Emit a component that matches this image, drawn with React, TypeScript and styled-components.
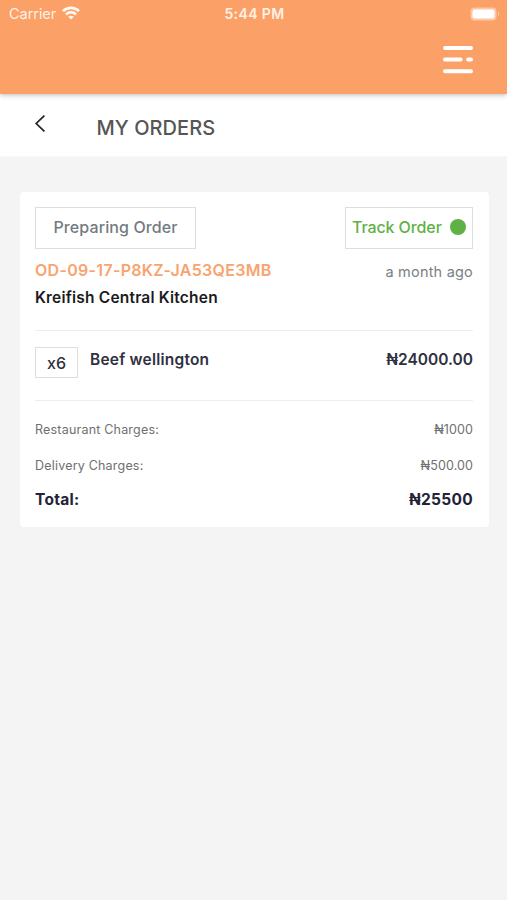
import React from "react";
import styled, { createGlobalStyle } from "styled-components";

const GlobalStyle = createGlobalStyle`
  * { box-sizing: border-box; }
  body {
    margin: 0;
    background: #f4f4f4;
    font-family: Inter, "Liberation Sans", sans-serif;
  }
`;

const Screen = styled.div`
  display: flex;
  flex-direction: column;
  width: 100%;
  min-height: 900px;
  background: #f4f4f4;
  overflow: hidden;
`;

const AppHeader = styled.header`
  position: relative;
  z-index: 1;
  height: 94px;
  background: #fba168;
  box-shadow: 0 1px 5px rgba(0, 0, 0, 0.28);
`;

const StatusBar = styled.div`
  display: grid;
  grid-template-columns: 1fr auto 1fr;
  align-items: center;
  height: 28px;
  padding: 0 7px 0 9px;
  color: #fff1e6;
`;

const Carrier = styled.div`
  display: flex;
  align-items: center;
  gap: 6px;
  font-size: 14.5px;
  line-height: 20px;
  letter-spacing: -0.05px;
`;

const Clock = styled.div`
  font-size: 14px;
  font-weight: 600;
  line-height: 20px;
  letter-spacing: 0.4px;
`;

const BatterySlot = styled.div`
  display: flex;
  justify-content: flex-end;
`;

const MenuRow = styled.div`
  display: flex;
  justify-content: flex-end;
  padding: 17px 33px 0 0;
`;

const PlainButton = styled.button`
  display: block;
  padding: 0;
  border: 0;
  background: none;
  line-height: 0;
`;

const TitleBar = styled.div`
  display: flex;
  align-items: flex-start;
  height: 63px;
  padding: 20px 34px 0;
  background: #fff;
  border-bottom: 1px solid #f8f8f8;
`;

const Title = styled.h1`
  margin: 2px 0 0 50.5px;
  font-size: 20px;
  font-weight: 500;
  line-height: 24px;
  letter-spacing: 0.05px;
  color: #555;
`;

const OrderCard = styled.article`
  display: flex;
  flex-direction: column;
  height: 335px;
  margin: 35px 18px 0 20px;
  padding: 15px 16px 0 15px;
  border-radius: 4px;
  background: #fff;
`;

const Row = styled.div<{ $h: number }>`
  display: flex;
  align-items: center;
  justify-content: space-between;
  height: ${(p) => p.$h}px;
`;

const StatusBox = styled.div`
  display: flex;
  align-items: center;
  justify-content: center;
  width: 161px;
  height: 42px;
  padding-bottom: 2px;
  border: 1px solid #dcdfe1;
  font-size: 16px;
  font-weight: 500;
  line-height: 20px;
  letter-spacing: 0.1px;
  color: #747b80;
`;

const TrackButton = styled.button`
  display: flex;
  align-items: center;
  justify-content: space-between;
  width: 128px;
  height: 42px;
  padding: 0 6px 2px 6px;
  border: 1px solid #dcdfe1;
  background: #fff;
  font: 500 16px/20px Inter, sans-serif;
  letter-spacing: -0.1px;
  color: #5fb146;
`;

const Dot = styled.span`
  width: 16px;
  height: 16px;
  border-radius: 50%;
  background: #5fb146;
`;

const OrderCode = styled.span`
  font-size: 16px;
  font-weight: 600;
  letter-spacing: 0.3px;
  color: #f8a46f;
`;

const Age = styled.span`
  padding-top: 3px;
  font-size: 14.5px;
  letter-spacing: 0.2px;
  color: #7c7f83;
`;

const Kitchen = styled.div`
  height: 39px;
  font-size: 15.5px;
  font-weight: 600;
  line-height: 13px;
  letter-spacing: 0.2px;
  color: #1b1b1d;
`;

const ItemRow = styled.div`
  display: flex;
  align-items: flex-start;
  height: 71px;
  padding-top: 16px;
  border-top: 1px solid #ededed;
  border-bottom: 1px solid #ededed;
  color: #2f3040;
`;

const Quantity = styled.div`
  width: 43px;
  height: 31px;
  border: 1px solid #dedede;
  font-size: 16px;
  font-weight: 500;
  line-height: 30px;
  text-align: center;
`;

const ItemText = styled.div`
  font-size: 15.5px;
  font-weight: 600;
  line-height: 25px;
`;

const ItemName = styled(ItemText)`
  margin-left: 12px;
  letter-spacing: 0.22px;
`;

const ItemPrice = styled(ItemText)`
  margin-left: auto;
  letter-spacing: 0;
`;

const Charges = styled.div`
  padding-top: 11px;
`;

const ChargeText = styled.span`
  font-size: 12.5px;
  line-height: 16px;
  letter-spacing: 0.2px;
  color: #6f6f72;
`;

const ChargeAmount = styled(ChargeText)`
  letter-spacing: 0.1px;
`;

const TotalText = styled.span`
  font-size: 15.5px;
  font-weight: 700;
  line-height: 20px;
  letter-spacing: 0.3px;
  color: #232338;
`;

const WifiIcon = () => (
  <svg width="18" height="16" viewBox="0 0 18 16" fill="none" stroke="#fff8f2" strokeWidth="2.7">
    <path d="M1 5.1C5.5.7 12.5.7 17 5.1" />
    <path d="M4 8.4c2.9-2.7 7.1-2.7 10 0" />
    <path d="M9 13.6 6.2 10.8c1.6-1.5 4-1.5 5.6 0z" fill="#fff8f2" stroke="none" />
  </svg>
);

const BatteryIcon = () => (
  <svg width="30" height="15" viewBox="0 0 30 15">
    <rect x="0.5" y="0.5" width="26" height="13" rx="4" fill="#fdc7a5" />
    <rect x="2.5" y="2.5" width="22" height="9" rx="2.2" fill="#fff" />
    <path d="M28 4.8c1.7.8 1.7 3.6 0 4.4z" fill="#fdc7a5" />
  </svg>
);

const MenuIcon = () => (
  <svg width="32" height="30" viewBox="0 0 32 30" stroke="#fff" strokeWidth="4" strokeLinecap="round">
    <path d="M3 3h26M3 14.6h15.6M26.1 14.6H29M3 26.2h26" />
  </svg>
);

const BackIcon = () => (
  <svg width="12" height="19" viewBox="0 0 12 19" fill="none" stroke="#222" strokeWidth="1.7">
    <path d="M10.4 1.6 2.2 9.5l8.2 7.9" />
  </svg>
);

const charges = [
  { label: "Restaurant Charges:", amount: "₦1000", height: 36 },
  { label: "Delivery Charges:", amount: "₦500.00", height: 35 },
];

export default function App() {
  return (
    <Screen>
      <GlobalStyle />
      <AppHeader>
        <StatusBar>
          <Carrier>
            Carrier <WifiIcon />
          </Carrier>
          <Clock>5:44 PM</Clock>
          <BatterySlot>
            <BatteryIcon />
          </BatterySlot>
        </StatusBar>
        <MenuRow>
          <PlainButton aria-label="Menu">
            <MenuIcon />
          </PlainButton>
        </MenuRow>
      </AppHeader>
      <TitleBar>
        <PlainButton aria-label="Back">
          <BackIcon />
        </PlainButton>
        <Title>MY ORDERS</Title>
      </TitleBar>
      <OrderCard>
        <Row $h={42}>
          <StatusBox>Preparing Order</StatusBox>
          <TrackButton>
            Track Order <Dot />
          </TrackButton>
        </Row>
        <Row $h={42}>
          <OrderCode>OD-09-17-P8KZ-JA53QE3MB</OrderCode>
          <Age>a month ago</Age>
        </Row>
        <Kitchen>Kreifish Central Kitchen</Kitchen>
        <ItemRow>
          <Quantity>x6</Quantity>
          <ItemName>Beef wellington</ItemName>
          <ItemPrice>₦24000.00</ItemPrice>
        </ItemRow>
        <Charges>
          {charges.map((c) => (
            <Row key={c.label} $h={c.height}>
              <ChargeText>{c.label}</ChargeText>
              <ChargeAmount>{c.amount}</ChargeAmount>
            </Row>
          ))}
          <Row $h={34}>
            <TotalText>Total:</TotalText>
            <TotalText>₦25500</TotalText>
          </Row>
        </Charges>
      </OrderCard>
    </Screen>
  );
}
